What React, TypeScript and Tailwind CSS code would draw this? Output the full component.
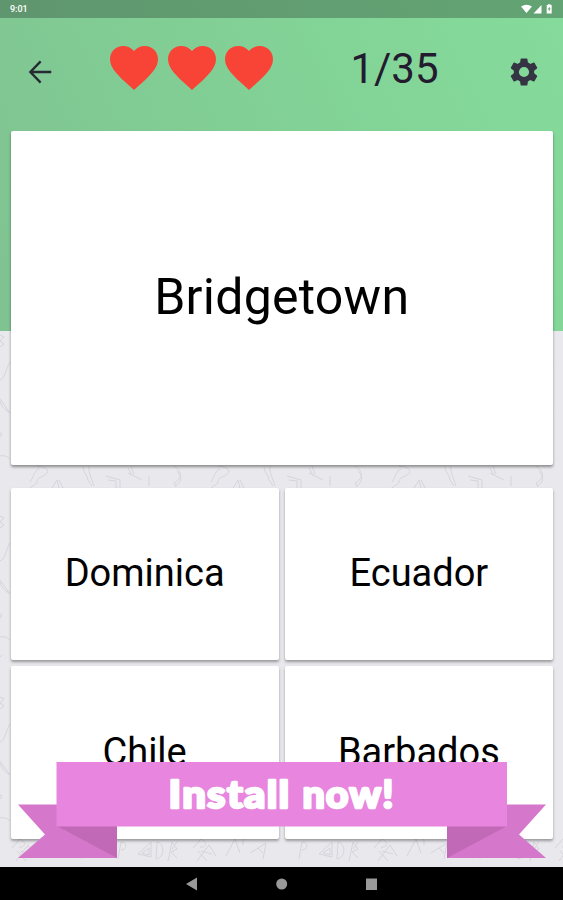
import React from "react";

const answers = ["Dominica", "Ecuador", "Chile", "Barbados"];

function Heart() {
  return (
    <svg className="h-[44px] w-[48px]" viewBox="2 3 20 18.35" preserveAspectRatio="none" fill="#f74436">
      <path d="m12 21.35-1.45-1.32C5.4 15.36 2 12.28 2 8.5 2 5.42 4.42 3 7.5 3c1.74 0 3.41.81 4.5 2.09C13.09 3.81 14.76 3 16.5 3 19.58 3 22 5.42 22 8.5c0 3.78-3.4 6.86-8.55 11.54z" />
    </svg>
  );
}

function Doodles() {
  return (
    <svg className="absolute inset-0 h-full w-full" fill="none" stroke="#d5d4da" strokeWidth="1">
      <defs>
        <pattern id="edges" width="181" height="181" patternUnits="userSpaceOnUse" y="134">
          <path d="M0 20l4 2-4 4 4 3-4 3M0 65c5-1 6-12 10-18M0 84l10 14M0 86c2 7 6 9 10 12M0 118l2 1-2 3M0 141c5-1 8 1 10 3M0 161l2-2M181 24l-7 8 7 4M181 60l-9 6M181 90c-6 4-8 10-2 16M172 118l6 5-6 6" />
        </pattern>
        <pattern id="band" width="181" height="60" patternUnits="userSpaceOnUse" y="465">
          <path d="M37 1c10 1 14 5 8 9-5 3-8 3-8 7-1 3-4 3-7 6M30 17c4-6 4-11 9-13M52 23l5-8 2 8M59 15l4 8M83 2c0 6 5 8 5 13l4 6M89 1c-1 6 3 13 5 20M106 11l14 4v8M108 15l8 1v7M128 3l4 7M131 1l3 8M128 8l14 7M149 11v10M174 1c8 5 9 12 0 17M174 18l2 4M177 6c6 6 4 12-2 15" />
        </pattern>
        <pattern id="footer" width="181" height="60" patternUnits="userSpaceOnUse" y="828">
          <path d="M16 33l12-16 7 11M20 23l11 3M118 31l3-17c7 0 6 8 0 8M138 26l13-12v15zM142 25l7-5v7zM157 14l-1 17c9-1 9-16 1-17zM168 33l4-19 5 7-6 3 6 6M177 14l-5 7M17 23l9 10M12 20l8-9M20 11c7 3 5 9-1 8M45 28l9-17 5 14M54 11l8-5M62 7v10M69 25l16-10-3 16M77 20l5 5" />
        </pattern>
      </defs>
      <rect y="331" width="100%" height="497" fill="url(#edges)" stroke="none" />
      <rect y="465" width="100%" height="23" fill="#e9e8ed" stroke="none" />
      <rect y="465" width="100%" height="23" fill="url(#band)" stroke="none" />
      <rect y="828" width="100%" height="40" fill="url(#footer)" stroke="none" />
    </svg>
  );
}

function Ribbon() {
  return (
    <svg className="absolute left-[18px] top-[762px] h-[97px] w-[528px]" viewBox="18 762 528 97">
      <path fill="#d577ca" d="M18 804.5h42V826h57v32H18l27-23.500zM546 804.500h-42V826h-57v32h99l-27-23.500z" />
      <path fill="#c168b7" d="M57 826h60v32zM507 826h-60v32z" />
      <path fill="#e885df" d="M56.500 762h450.500v64.500H56.500z" />
      <g
        fill="#fff"
        stroke="#fff"
        strokeWidth="2.400"
        strokeLinejoin="round"
        className="font-['Lato',sans-serif] text-[38px] font-black"
      >
        <text x="168.500" y="807.500" textLength="122" letterSpacing="1.200" lengthAdjust="spacingAndGlyphs">Install</text>
        <text x="302.500" y="807.500" textLength="92" letterSpacing="1" lengthAdjust="spacingAndGlyphs">now!</text>
      </g>
    </svg>
  );
}

export default function App() {
  return (
    <div className="relative flex h-[900px] w-[563px] flex-col overflow-hidden bg-[#e9e8ed] font-['Roboto',sans-serif] text-black">
      <Doodles />
      <div className="absolute inset-x-0 top-0 h-[331px] bg-[linear-gradient(65deg,#80c292_0%,#81cc94_35%,#83d698_75%,#85db9b_100%)]" />

      <div className="relative flex h-[17.500px] shrink-0 items-center justify-between bg-black/25 pl-[10px] pr-[10px] text-white">
        <span className="pt-px text-[9px] font-medium leading-none">9:01</span>
        <svg className="mt-px h-[10px] w-[32px]" viewBox="0 0 32 10" fill="currentColor">
          <path d="M0 2.500Q5.500-1 11 2.500L5.500 9zM20.500 1v8.500h-8zM27 1V.2h2.500V1h1.200v8.500h-5V1zM28.700 2.500l-2 3h1.200v2l1.800-3h-1z" fillRule="evenodd" />
        </svg>
      </div>

      <header className="relative flex h-[113px] shrink-0 items-start">
        <svg className="ml-[25px] mt-[39.500px] size-[30px]" viewBox="0 0 24 24" fill="none" stroke="#262a35" strokeWidth="1.900">
          <path d="M21 12H5M12.500 3.500 4.300 12l8.200 8.500" />
        </svg>
        <div className="ml-[55px] mt-[28.500px] flex gap-[9.700px]">
          <Heart />
          <Heart />
          <Heart />
        </div>
        <span className="ml-[77px] mt-[26px] w-[96px] whitespace-nowrap text-[42px] leading-[50px] text-[#231b2f]">1/35</span>
        <svg className="ml-[60.300px] mt-[37.500px] size-[34px]" viewBox="0 0 24 24" fill="#353443">
          <path d="M19.140 12.940c.040-.3.060-.61.060-.94 0-.32-.020-.64-.070-.94l2.030-1.580c.180-.140.230-.41.120-.61l-1.920-3.320c-.120-.220-.370-.290-.590-.220l-2.390.96c-.5-.38-1.030-.7-1.620-.94l-.36-2.540c-.040-.240-.240-.41-.48-.41h-3.840c-.240 0-.43.170-.47.41l-.36 2.540c-.59.240-1.130.57-1.620.94l-2.390-.96c-.220-.080-.47 0-.59.220L2.740 8.870c-.120.210-.080.470.120.61l2.030 1.580c-.050.300-.090.630-.090.940s.020.640.070.940l-2.030 1.580c-.180.140-.230.410-.120.610l1.920 3.320c.120.220.370.290.590.220l2.390-.96c.5.380 1.030.7 1.620.94l.36 2.540c.050.240.240.410.480.410h3.840c.240 0 .440-.170.470-.410l.36-2.540c.59-.240 1.130-.56 1.620-.94l2.390.96c.220.080.470 0 .59-.220l1.920-3.320c.120-.220.070-.47-.120-.61zM12 15.600A3.600 3.600 0 1 1 12 8.400a3.600 3.600 0 0 1 0 7.200z" />
        </svg>
      </header>

      <main className="relative flex flex-1 flex-col pl-[10.500px] pr-[10px]">
        <div className="flex h-[334px] items-center justify-center rounded-[2px] bg-white text-[50px] tracking-[0.250px] shadow-[0_2px_3px_rgba(0,0,0,0.4)]">
          Bridgetown
        </div>
        <div className="mt-[23px] grid grid-cols-2 gap-x-[6px] gap-y-[6px]">
          {answers.map((answer) => (
            <div key={answer} className="flex h-[172.500px] items-center justify-center rounded-[2px] bg-white text-[38px] shadow-[0_2px_3px_rgba(0,0,0,0.35)]">
              {answer}
            </div>
          ))}
        </div>
      </main>

      <Ribbon />

      <nav className="relative flex h-[33px] shrink-0 items-center justify-center bg-black">
        <svg className="mr-[2px] h-[14px] w-[192px]" viewBox="185 876.500 192 14" fill="#999">
          <path d="M186 883.500l11-6.500v13zM366 878h11.500v11.500H366z" />
          <circle cx="281.700" cy="883.500" r="5.500" />
        </svg>
      </nav>
    </div>
  );
}
